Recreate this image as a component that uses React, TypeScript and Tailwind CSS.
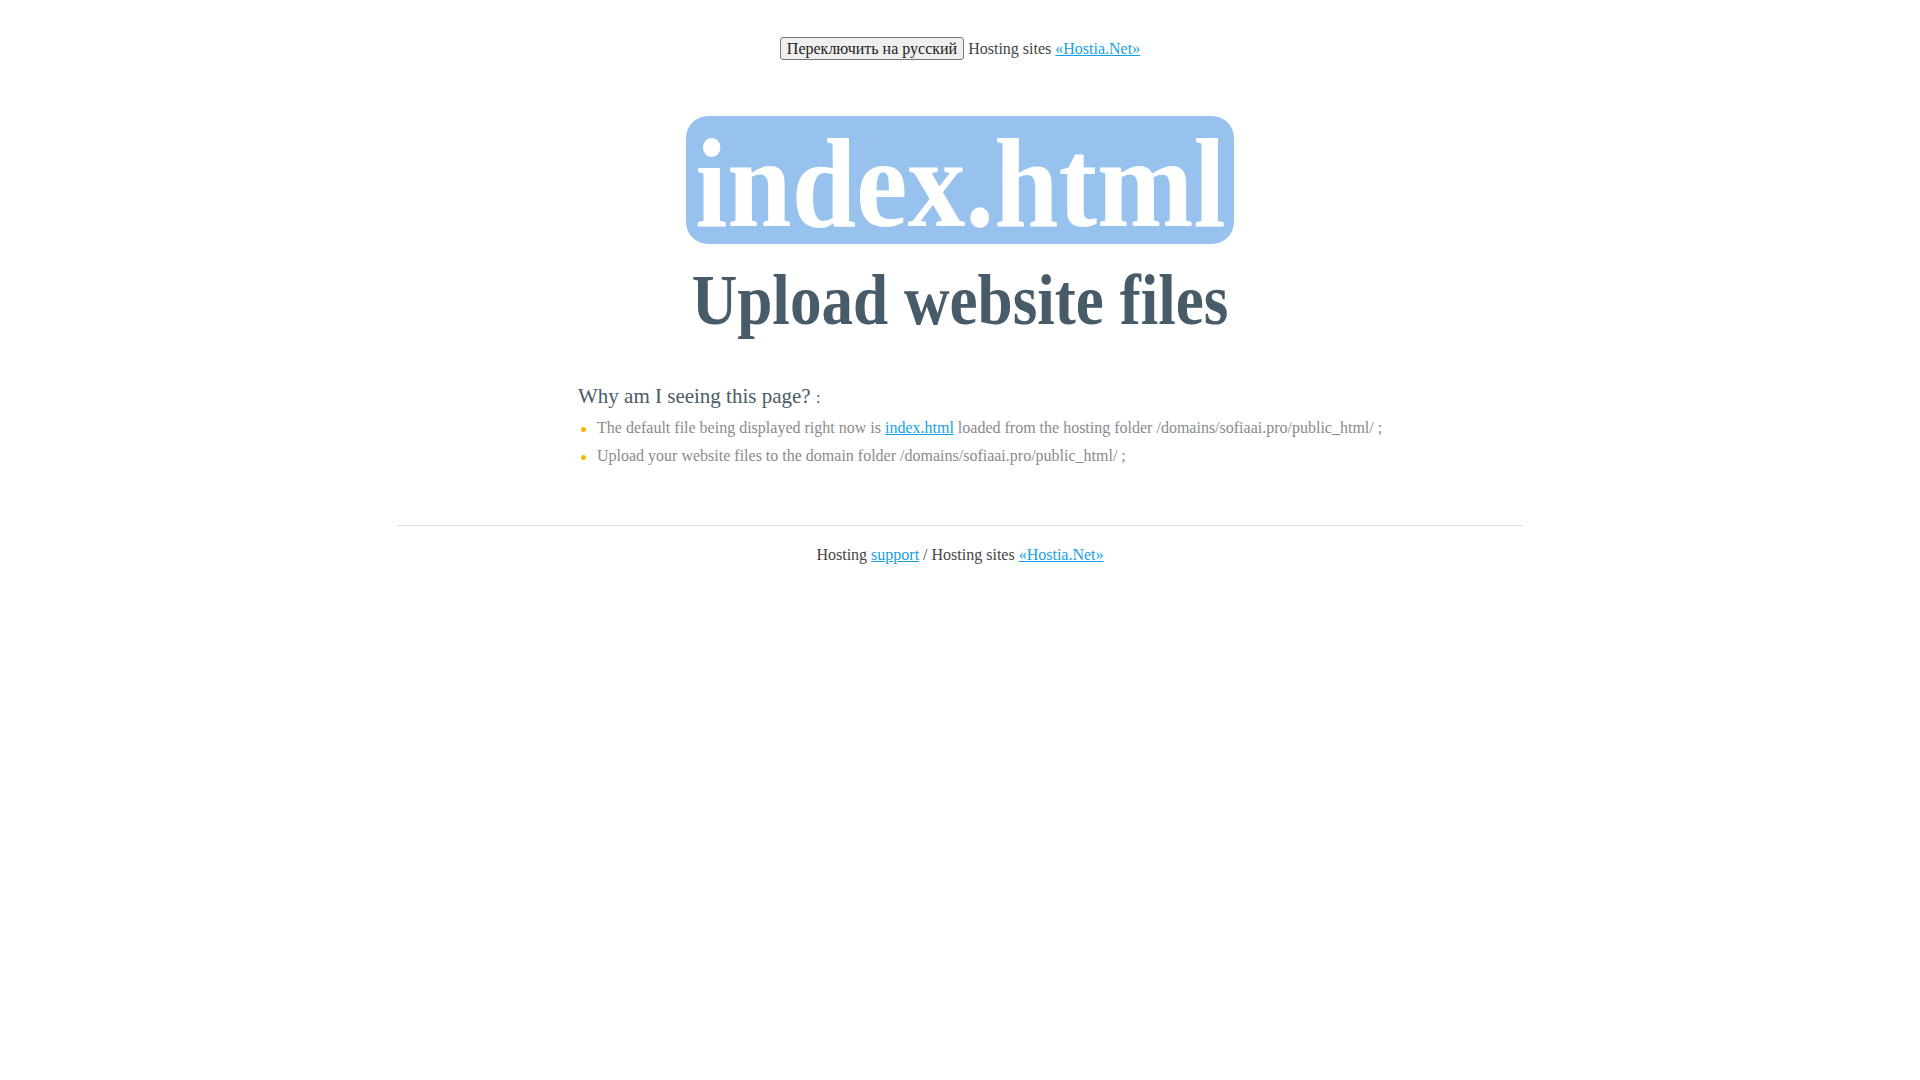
const serif = "font-['Liberation_Serif',serif]";
const link = 'text-[#169fe6] underline';

export default function App() {
  return (
    <div className={`min-h-screen bg-white ${serif} text-[16px] text-[#444]`}>
      <div className="mx-auto w-[1126px]">
        <div className="flex items-baseline justify-center pt-[37px]">
          <button className="rounded-[3px] border border-[#767676] bg-[#efefef] px-[6px] py-[1px] font-['Liberation_Serif',serif] text-[16px] leading-[19px] text-[#222]">
            Переключить на русский
          </button>
          <span className="ml-[4px] leading-[19px]">
            Hosting sites{' '}
            <a href="#" className={link}>
              «Hostia.Net»
            </a>
          </span>
        </div>

        <div className="mt-[56px] flex justify-center">
          <div className="flex h-[128px] w-[548px] justify-center rounded-[22px] bg-[#98c2ee] text-[128px] font-bold leading-[134px] whitespace-nowrap text-white">
            <span className="inline-block scale-x-[0.904]">index.html</span>
          </div>
        </div>

        <h1 className="mt-[16px] flex justify-center text-[72px] font-bold leading-[80px] whitespace-nowrap text-[#475b68]">
          <span className="inline-block scale-x-[0.877]">Upload website files</span>
        </h1>

        <div className="mt-[42px] pl-[181px]">
          <h3 className="text-[21px] leading-[28px] text-[#4b5b67]">
            Why am I seeing this page? <span className="text-[16px]">:</span>
          </h3>
          <ul className="mt-[2px] text-[#8a8a8a]">
            <li className="leading-[28px]">
              <span className="ml-[3px] mr-[11px] inline-block h-[5px] w-[5px] rounded-full bg-[#f7b500] align-middle" />
              The default file being displayed right now is{' '}
              <a href="#" className={link}>
                index.html
              </a>{' '}
              loaded from the hosting folder /domains/sofiaai.pro/public_html/ ;
            </li>
            <li className="leading-[28px]">
              <span className="ml-[3px] mr-[11px] inline-block h-[5px] w-[5px] rounded-full bg-[#f7b500] align-middle" />
              Upload your website files to the domain folder /domains/sofiaai.pro/public_html/ ;
            </li>
          </ul>
        </div>

        <div className="mt-[55px] h-px bg-[#e2e2e2]" />

        <div className="mt-[15px] text-center leading-[28px]">
          Hosting{' '}
          <a href="#" className={link}>
            support
          </a>{' '}
          / Hosting sites{' '}
          <a href="#" className={link}>
            «Hostia.Net»
          </a>
        </div>
      </div>
    </div>
  );
}
